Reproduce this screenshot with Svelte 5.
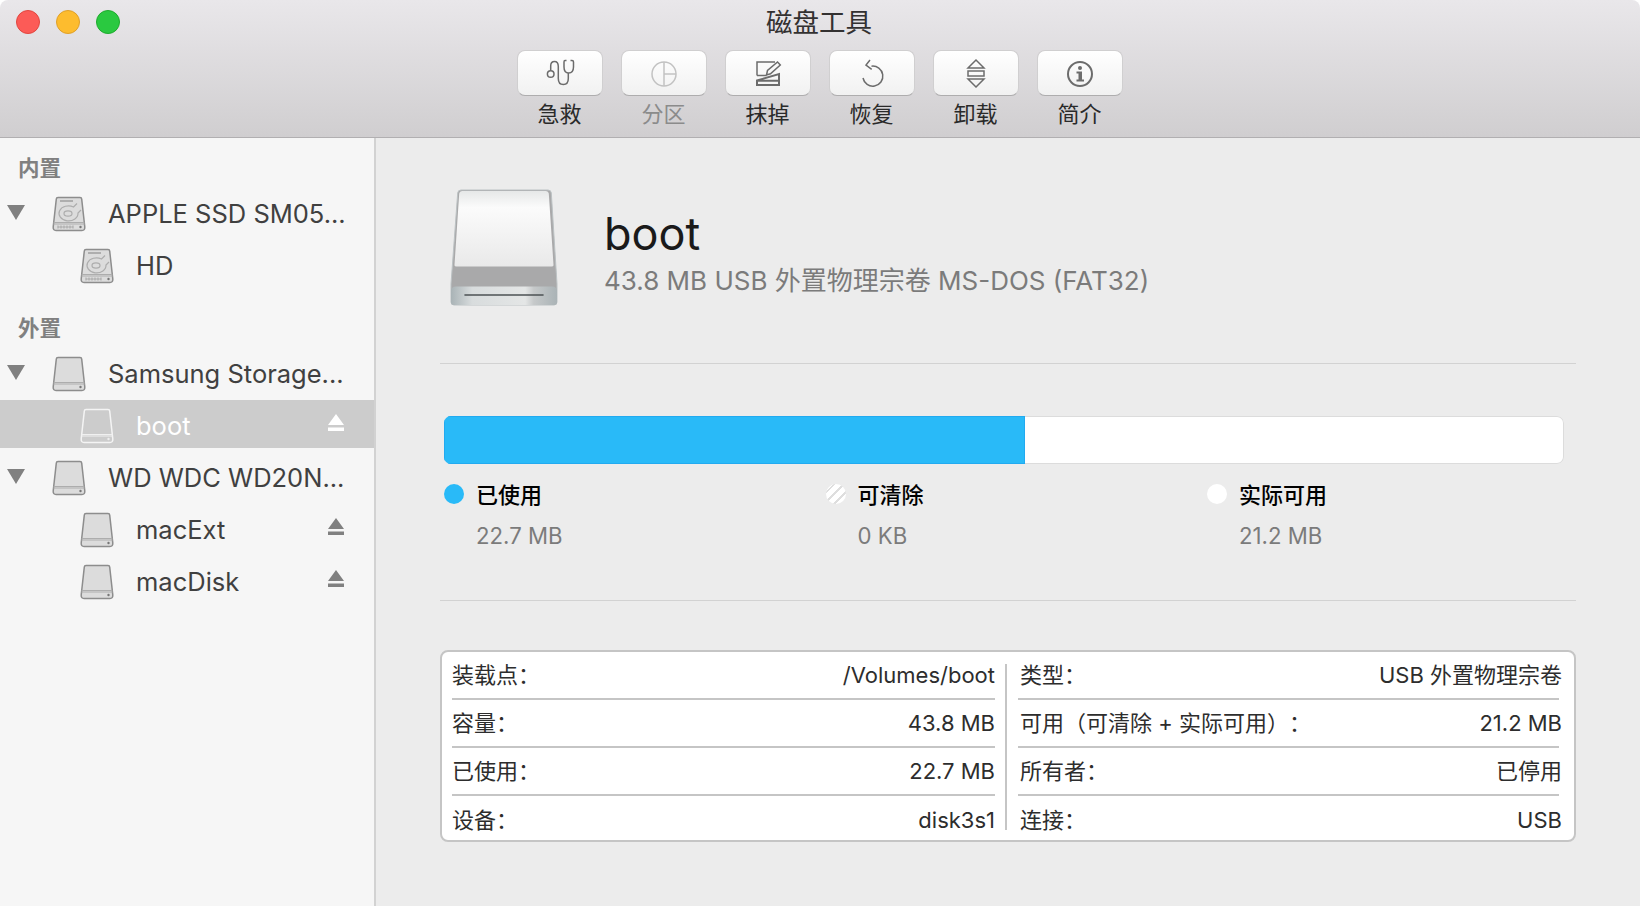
<script>
  const tools = [
    { label: '急救', icon: 'steth' },
    { label: '分区', icon: 'pie', off: true },
    { label: '抹掉', icon: 'erase' },
    { label: '恢复', icon: 'undo' },
    { label: '卸载', icon: 'mount' },
    { label: '简介', icon: 'info' }
  ];
  const legend = [
    { name: '已使用', value: '22.7 MB', kind: 'used' },
    { name: '可清除', value: '0 KB', kind: 'purge' },
    { name: '实际可用', value: '21.2 MB', kind: 'free' }
  ];
  const left = [
    ['装载点：', '/Volumes/boot'],
    ['容量：', '43.8 MB'],
    ['已使用：', '22.7 MB'],
    ['设备：', 'disk3s1']
  ];
  const right = [
    ['类型：', 'USB 外置物理宗卷'],
    ['可用（可清除 + 实际可用）：', '21.2 MB'],
    ['所有者：', '已停用'],
    ['连接：', 'USB']
  ];
</script>

{#snippet disk(kind)}
  <svg class="disk" viewBox="0 0 34 36" aria-hidden="true">
    <path class="d-body" d="M6 1.500h22q1.600 0 1.700 1.600L32.800 31q.2 3.500-2.800 3.500H4q-3 0-2.800-3.500L4.300 3.100Q4.400 1.500 6 1.500z" />
    <path class="d-line" d="M1.600 26.500h30.800M1.400 28h31.200" />
    <circle class="d-dot" cx="28.500" cy="31" r="1.200" />
    {#if kind === 'hd'}
      <path class="d-line dark" d="M8 5h13" stroke-width="2" />
      <path class="d-line" d="M25 7.500 21.500 11 A9.500 7.500 0 1 0 26 17 L29 14" />
      <ellipse class="d-line" cx="16" cy="17.500" rx="4" ry="2.600" />
      <path class="d-line" d="M6 31h15M6 29.500v3M9 29.500v3M12 29.500v3M15 29.500v3M18 29.500v3M21 29.500v3" stroke-width="1" />
    {/if}
  </svg>
{/snippet}

{#snippet eject()}
  <svg class="eject" viewBox="0 0 16 17" aria-hidden="true">
    <path d="M8 0 16 11H0zM0 13.500h16V17H0z" />
  </svg>
{/snippet}

{#snippet tri()}
  <svg class="tri" viewBox="0 0 18 15" aria-hidden="true"><path d="M0 0h18L9 15z" /></svg>
{/snippet}

<div class="win">
  <header class="bar">
    <div class="lights">
      <span class="l red"></span><span class="l yellow"></span><span class="l green"></span>
    </div>
    <div class="title">磁盘工具</div>
    <div class="tools">
      {#each tools as t}
        <div class="tool" class:off={t.off}>
          <div class="btn">
            <svg viewBox="0 0 30 30" aria-hidden="true">
              {#if t.icon === 'steth'}
                <circle cx="5.700" cy="16" r="3.300" />
                <path d="M5.700 12.700V8Q5.700 3.500 9.500 3.500T13.300 8.500V20.500Q13.300 26.500 18.300 26.500T23.300 20.500V15" />
                <path d="M21.500 2.500H20Q19 2.500 19 4V9Q19 15 23.700 15T28.500 9V4Q28.500 2.500 27 2.500H25.500" />
              {:else if t.icon === 'pie'}
                <circle cx="15" cy="16" r="12" />
                <path d="M15 4v24M15 16h12" />
              {:else if t.icon === 'erase'}
                <path d="M22 4H4v13.500" />
                <path d="M4 17.500h9.500" />
                <path d="M13.500 17l1-4.500L24.500 4l2.800 3L17.500 15.800z" />
                <path class="thick" d="M4 22.500 26 16V27H4zM4 22.800H26" />
              {:else if t.icon === 'undo'}
                <path d="M14.500 8.200A10 10 0 1 1 6 20" />
                <path d="M13 2 9 7l5.700 4.300" />
              {:else if t.icon === 'mount'}
                <path d="M15 2 7 10h16z" />
                <rect x="7" y="13" width="16" height="5" />
                <path d="M15 29 7 21h16z" />
              {:else}
                <circle class="thick" cx="15" cy="16" r="12" />
                <circle class="fill" cx="15" cy="10" r="2" />
                <path class="fill" d="M11.500 13.500H17V21.500H19V23.500H11.500V21.500H13.500V15.500H11.500z" />
              {/if}
            </svg>
          </div>
          <span class="lab">{t.label}</span>
        </div>
      {/each}
    </div>
  </header>

  <div class="body">
    <aside class="side">
      <h3 class="sec first">内置</h3>
      <div class="row"><span class="tw">{@render tri()}</span>{@render disk('hd')}<span class="nm">APPLE SSD SM05...</span></div>
      <div class="row sub"><span class="ind"></span>{@render disk('hd')}<span class="nm">HD</span></div>
      <h3 class="sec">外置</h3>
      <div class="row"><span class="tw">{@render tri()}</span>{@render disk('ext')}<span class="nm">Samsung Storage...</span></div>
      <div class="row sub sel"><span class="ind"></span>{@render disk('ext')}<span class="nm">boot</span>{@render eject()}</div>
      <div class="row"><span class="tw">{@render tri()}</span>{@render disk('ext')}<span class="nm">WD WDC WD20N...</span></div>
      <div class="row sub"><span class="ind"></span>{@render disk('ext')}<span class="nm">macExt</span>{@render eject()}</div>
      <div class="row sub"><span class="ind"></span>{@render disk('ext')}<span class="nm">macDisk</span>{@render eject()}</div>
    </aside>

    <main class="main">
      <section class="head">
        <svg class="bigdisk" viewBox="0 0 108 118" aria-hidden="true">
          <defs>
            <linearGradient id="top" x1="0" y1="0" x2="0" y2="1">
              <stop offset="0" stop-color="#e6e8e8" /><stop offset=".22" stop-color="#fbfbfb" /><stop offset="1" stop-color="#e9e9e9" />
            </linearGradient>
            <linearGradient id="front" x1="0" y1="0" x2="1" y2="0">
              <stop offset="0" stop-color="#a9b3b6" /><stop offset=".2" stop-color="#d8dcdd" /><stop offset=".7" stop-color="#e4e6e6" /><stop offset=".78" stop-color="#c6c9ca" /><stop offset="1" stop-color="#aab3b6" />
            </linearGradient>
          </defs>
          <path d="M11 1h87q3 0 3.300 3L107 95v18q0 3-3 3H4q-3 0-3-3V95L7.700 4Q8 1 11 1z" fill="#a9a9aa" stroke="#bcc2c4" />
          <path d="M12 2h84q2.500 0 2.800 2.500L103.500 76q.2 1.500-2 1.500H6.500q-2.200 0-2-1.500L9.200 4.500Q9.500 2 12 2z" fill="url(#top)" />
          <path d="M1 102q0-4.500 5-4.500h96q5 0 5 4.500v11q0 3-3 3H4q-3 0-3-3z" fill="url(#front)" />
          <path d="M15 106h78" stroke="#4c5254" stroke-width="1.600" stroke-linecap="round" />
        </svg>
        <div class="htext">
          <h1>boot</h1>
          <p>43.8 MB USB 外置物理宗卷 MS-DOS (FAT32)</p>
        </div>
      </section>

      <section class="usage">
        <div class="meter"><div class="fillbar"></div></div>
        <div class="legend">
          {#each legend as l}
            <div class="item">
              <span class="dot {l.kind}"></span>
              <div>
                <div class="ln">{l.name}</div>
                <div class="lv">{l.value}</div>
              </div>
            </div>
          {/each}
        </div>
      </section>

      <section class="table">
        <div class="col">
          {#each left as r}
            <div class="cell"><span>{r[0]}</span><span>{r[1]}</span></div>
          {/each}
        </div>
        <div class="divider"></div>
        <div class="col r">
          {#each right as r}
            <div class="cell"><span>{r[0]}</span><span>{r[1]}</span></div>
          {/each}
        </div>
      </section>
    </main>
  </div>
</div>

<style>
  :global(body) {
    margin: 0;
    background: #fff;
    font-family: Inter, "Noto Sans CJK SC", sans-serif;
    overflow: hidden;
    text-spacing-trim: space-all;
  }
  .win { width: 1640px; height: 906px; display: flex; flex-direction: column; overflow: hidden; }

  .bar {
    position: relative;
    height: 138px;
    box-sizing: border-box;
    flex: none;
    background: linear-gradient(#e9e7ea, #d0ced0);
    border-bottom: 1px solid #b1afb1;
    padding-top: 7px;
    border-radius: 8px 8px 0 0;
  }
  .lights { position: absolute; left: 16px; top: 10px; display: flex; gap: 16px; }
  .l { width: 24px; height: 24px; border-radius: 50%; box-sizing: border-box; border: 1px solid; }
  .red { background: #fc5b57; border-color: #e2463f; }
  .yellow { background: #fdbc2e; border-color: #e0a028; }
  .green { background: #2ac940; border-color: #1eab2d; }
  .title { text-align: center; font-size: 26.500px; line-height: 30px; color: #333131; padding-right: 2px; }
  .tools { display: flex; justify-content: center; gap: 18px; margin-top: 13px; padding-right: 1px; }
  .tool { width: 86px; display: flex; flex-direction: column; align-items: center; }
  .btn {
    width: 86px; height: 46px; box-sizing: border-box;
    border-radius: 8px;
    background: linear-gradient(#ffffff, #f1f1f1);
    border: 1px solid #d0cfd0;
    border-bottom-color: #aeadae;
    display: flex; align-items: center; justify-content: center;
  }
  .btn svg { width: 30px; height: 30px; fill: none; stroke: #6c6c6c; stroke-width: 1.500; }
  .btn svg .fill { fill: #6c6c6c; stroke: none; }
  .btn svg .thick { stroke-width: 2; }
  .lab { font-size: 22px; line-height: 28px; margin-top: 4px; color: #2a2a2a; }
  .off .lab { color: #8b8b8b; }
  .off .btn svg { stroke: #c2c2c2; }

  .body { flex: 1; display: flex; min-height: 0; background: #ececec; }
  .side {
    width: 376px; box-sizing: border-box; flex: none;
    background: #f6f6f6;
    border-right: 2px solid #d2d2d2;
  }
  .sec { margin: 0 0 5px; font-size: 21.500px; font-weight: 700; line-height: 30px; padding: 21px 0 0 18px; color: #808080; }
  .sec.first { padding-top: 15px; }
  .row {
    height: 48px; margin-bottom: 4px; display: flex; align-items: center; box-sizing: border-box;
    padding: 3px 30px 0 0; font-size: 25.500px; color: #404040;
  }
  .tw { width: 52px; flex: none; padding-left: 7px; box-sizing: border-box; display: flex; align-items: center; margin-top: -2px; }
  .ind { width: 80px; flex: none; }
  .tri { width: 18px; height: 15px; fill: #808080; }
  .disk { width: 34px; height: 36px; flex: none; margin-right: 22px; }
  .d-body { fill: #dcdcdc; stroke: #8d8d8d; stroke-width: 1.500; }
  .d-line { fill: none; stroke: #adadad; stroke-width: 1.200; }
  .d-line.dark { stroke: #909090; }
  .d-dot { fill: #777; }
  .nm { flex: 1; white-space: nowrap; }
  .eject { width: 16px; height: 17px; fill: #808080; flex: none; margin-top: -6px; }
  .sel { background: #cccccc; color: #fff; }
  .sel .d-body { fill: #ccc; stroke: #f4f4f4; }
  .sel .d-line { stroke: #f0f0f0; }
  .sel .d-dot { fill: #eee; }
  .sel .eject { fill: #fff; }

  .main { flex: 1; min-width: 0; padding: 0 64px; box-sizing: border-box; }
  .head {
    display: flex; align-items: flex-start; gap: 46px;
    padding-left: 10px;
    height: 226px;
    box-sizing: border-box;
    border-bottom: 1px solid #d2d2d2;
    width: 1136px;
  }
  .bigdisk { width: 108px; height: 118px; flex: none; margin-top: 51px; }
  .htext { margin-top: 68px; }
  h1 { margin: 0; font-size: 45px; font-weight: 400; line-height: 56px; color: #1a1a1a; }
  .htext p { margin: 2px 0 0; font-size: 26px; line-height: 34px; color: #7b7b7b; white-space: nowrap; }

  .usage { height: 237px; width: 1136px; padding: 52px 0 0 4px; box-sizing: border-box; border-bottom: 1px solid #d2d2d2; }
  .meter { width: 1120px; height: 48px; background: #fff; border-radius: 7px; overflow: hidden; box-shadow: inset 0 0 0 1px #dcdcdc; }
  .fillbar { width: 581px; height: 100%; background: #29baf8; box-shadow: inset 0 0 0 1px #22aaf0; }
  .legend { display: flex; margin-top: 20px; }
  .item { width: 381.500px; flex: none; display: flex; gap: 12px; }
  .dot { width: 20px; height: 20px; border-radius: 50%; flex: none; background: #fff; }
  .dot.used { background: #29baf8; }
  .dot.purge { background: repeating-linear-gradient(135deg, #fff 0 5px, #dedede 5px 7px); }
  .ln { font-size: 22px; font-weight: 500; line-height: 26px; color: #000; margin-top: -2px; }
  .lv { font-size: 22.200px; line-height: 28px; margin-top: 14px; color: #7b7b7b; }

  .table {
    margin-top: 49px; width: 1136px; height: 192px; box-sizing: border-box;
    background: #fff; border: 2px solid #c5c5c5; border-radius: 8px;
    display: flex; padding: 0 12px 0 10px;
    font-size: 22px; line-height: 30px; color: #2d2d2d;
  }
  .col { width: 543px; flex: none; display: flex; flex-direction: column; }
  .divider { width: 2px; flex: none; background: #c5c5c5; margin: 12px 11px 10px 10px; }
  .cell { height: 48px; flex: none; display: flex; justify-content: space-between; align-items: center; box-sizing: border-box; padding-bottom: 1px; border-bottom: 2px solid #c5c5c5; white-space: nowrap; }
  .cell:last-child { border-bottom: 0; height: 44px; padding: 3px 0 0; }
  .col.r { width: 541px; }
  .col.r .cell span:first-child { margin-left: 2px; }
  .col.r .cell span:last-child { margin-right: -3px; }
</style>
